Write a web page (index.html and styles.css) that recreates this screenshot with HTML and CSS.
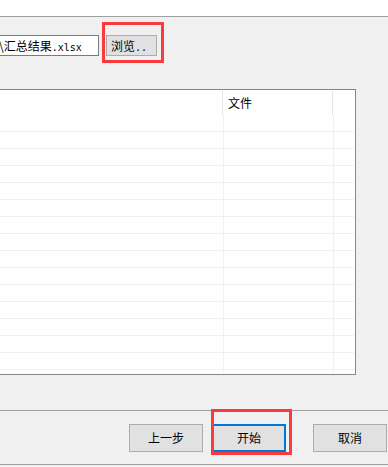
FILE: index.html
```html
<!DOCTYPE html>
<html lang="zh">
<head>
<meta charset="utf-8">
<title>汇总</title>
<link rel="stylesheet" href="styles.css">
</head>
<body>
<div class="top"></div>
<div class="file-row">
  <div class="path">\汇总结果<span class="mono">.xlsx</span></div>
  <button class="btn btn-browse">浏览<span class="mono">..</span></button>
</div>
<div class="table">
  <div class="thead">
    <div class="th"></div>
    <div class="th sep">文件</div>
    <div class="th sep"></div>
  </div>
  <div class="tbody">
    <div class="row"><i></i><i></i><i></i></div>
    <div class="row"><i></i><i></i><i></i></div>
    <div class="row"><i></i><i></i><i></i></div>
    <div class="row"><i></i><i></i><i></i></div>
    <div class="row"><i></i><i></i><i></i></div>
    <div class="row"><i></i><i></i><i></i></div>
    <div class="row"><i></i><i></i><i></i></div>
    <div class="row"><i></i><i></i><i></i></div>
    <div class="row"><i></i><i></i><i></i></div>
    <div class="row"><i></i><i></i><i></i></div>
    <div class="row"><i></i><i></i><i></i></div>
    <div class="row"><i></i><i></i><i></i></div>
    <div class="row"><i></i><i></i><i></i></div>
    <div class="row"><i></i><i></i><i></i></div>
    <div class="row"><i></i><i></i><i></i></div>
    <div class="row filler"><i></i><i></i><i></i></div>
  </div>
</div>
<div class="footer">
  <button class="btn btn-wide">上一步</button>
  <button class="btn btn-wide focused">开始</button>
  <button class="btn btn-wide btn-cancel">取消</button>
</div>
<div class="mark mark-browse"></div>
<div class="mark mark-start"></div>
</body>
</html>
```
FILE: styles.css
```css
html, body {
  margin: 0;
  padding: 0;
}
body {
  width: 388px;
  height: 467px;
  overflow: hidden;
  background: #f0f0f0;
  font-family: "Noto Sans CJK SC", "Liberation Sans", sans-serif;
  font-size: 12px;
  color: #000;
  position: relative;
}
.top {
  height: 16px;
  background: #fff;
  border-bottom: 1px solid #a0a0a0;
}
.file-row {
  margin-top: 18px;
  display: flex;
  gap: 7px;
  height: 21px;
}
.path {
  box-sizing: border-box;
  margin-left: -20px;
  width: 119px;
  height: 21px;
  background: #fff;
  border: 1px solid #7a7a7a;
  padding-left: 18px;
  line-height: 19px;
  white-space: nowrap;
  overflow: hidden;
}
.mono {
  font-family: "DejaVu Sans Mono", "Liberation Mono", monospace;
  font-size: 10px;
}
.btn {
  box-sizing: border-box;
  background: #e1e1e1;
  border: 1px solid #adadad;
  font-family: "Noto Sans CJK SC", "Liberation Sans", sans-serif;
  font-size: 12px;
  color: #000;
  padding: 0;
  margin: 0;
}
.btn-browse {
  width: 51px;
  height: 21px;
  text-align: left;
  padding-left: 4px;
  line-height: 19px;
}
.table {
  box-sizing: border-box;
  margin-top: 33px;
  margin-left: -40px;
  width: 396px;
  height: 286px;
  background: #fff;
  border: 1px solid #828790;
}
.thead {
  display: grid;
  grid-template-columns: 261px 110px 23px;
  height: 25px;
}
.th {
  box-sizing: border-box;
  padding-left: 5px;
  line-height: 24px;
}
.th.sep {
  border-left: 1px solid #e5e5e5;
  margin-top: 1px;
  line-height: 23px;
}
.tbody {
  padding-right: 1px;
}
.row {
  display: grid;
  grid-template-columns: 262px 110px 21px;
  height: 17px;
  box-sizing: border-box;
  border-bottom: 1px solid #f0f0f0;
}
.row i {
  display: block;
  box-sizing: border-box;
}
.row i + i {
  border-left: 1px solid #f0f0f0;
}
.row.filler {
  height: 3px;
  border-bottom: 0;
}
.footer {
  margin-top: 35px;
  border-top: 1px solid #a0a0a0;
  border-bottom: 1px solid #a0a0a0;
  padding: 13px 1px 12px 0;
  display: flex;
  justify-content: flex-end;
  gap: 9px;
}
.btn-wide {
  width: 74px;
  height: 28px;
  line-height: 26px;
}
.btn-cancel {
  margin-left: 18px;
}
.focused {
  border: 2px solid #0078d7;
  line-height: 24px;
}
.mark {
  position: absolute;
  box-sizing: border-box;
  border: 3px solid #fb3b3b;
}
.mark-browse {
  left: 102px;
  top: 22px;
  width: 62px;
  height: 41px;
}
.mark-start {
  left: 211px;
  top: 409px;
  width: 81px;
  height: 46px;
}
```
